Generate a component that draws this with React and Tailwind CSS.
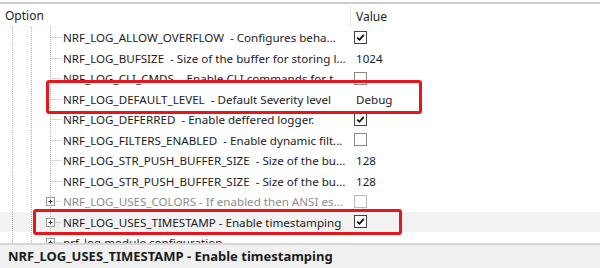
import React from "react";

const rows = [
  { name: "NRF_LOG_ALLOW_OVERFLOW  - Configures beha...", value: "on" },
  { name: "NRF_LOG_BUFSIZE  - Size of the buffer for storing l...", value: "1024" },
  { name: "NRF_LOG_CLI_CMDS  - Enable CLI commands for t...", value: "off" },
  { name: "NRF_LOG_DEFAULT_LEVEL  - Default Severity level", value: "Debug" },
  { name: "NRF_LOG_DEFERRED  - Enable deffered logger.", value: "on" },
  { name: "NRF_LOG_FILTERS_ENABLED  - Enable dynamic filt...", value: "off" },
  { name: "NRF_LOG_STR_PUSH_BUFFER_SIZE  - Size of the bu...", value: "128" },
  { name: "NRF_LOG_STR_PUSH_BUFFER_SIZE  - Size of the bu...", value: "128" },
  { name: "NRF_LOG_USES_COLORS - If enabled then ANSI es...", value: "off", plus: true, disabled: true },
  { name: "NRF_LOG_USES_TIMESTAMP - Enable timestamping", value: "on", plus: true, selected: true },
  { name: "nrf_log module configuration", value: "", plus: true },
];

function TreeGuide({ plus }) {
  return (
    <svg width="63" height="20.5" className="shrink-0">
      <g stroke="#b4b4b4" strokeWidth="1" strokeDasharray="1 1">
        <line x1="12.5" y1="0" x2="12.5" y2="20.5" />
        <line x1="31.5" y1="0" x2="31.5" y2="20.5" />
        <line x1="50.5" y1="0" x2="50.5" y2="20.5" />
        <line x1="50.5" y1="10.5" x2="62" y2="10.5" />
      </g>
      {plus && (
        <g>
          <rect x="46.5" y="6.5" width="8" height="8" fill="#fff" stroke="#9a9a9a" />
          <line x1="48.5" y1="10.5" x2="52.5" y2="10.5" stroke="#333" />
          <line x1="50.5" y1="8.5" x2="50.5" y2="12.5" stroke="#333" />
        </g>
      )}
    </svg>
  );
}

function Check({ checked, disabled }) {
  return (
    <div
      className={
        "w-[13px] h-[13px] border bg-white flex items-center justify-center " +
        (disabled ? "border-[#b8b8b8]" : checked ? "border-[#444]" : "border-[#8a8a8a]")
      }
    >
      {checked && (
        <svg width="9" height="9" viewBox="0 0 9 9">
          <path d="M1.2 4.6 L3.4 6.8 L7.8 1.8" fill="none" stroke="#111" strokeWidth="1.8" />
        </svg>
      )}
    </div>
  );
}

export default function App() {
  return (
    <div
      className="relative w-[600px] h-[268px] overflow-hidden bg-white flex flex-col text-[11.6px] text-[#1b1b1b]"
      style={{ fontFamily: '"Noto Sans", "Open Sans", sans-serif' }}
    >
      <div className="h-[2px] shrink-0" />
      <div className="h-[2px] bg-[#cdcdcd] shrink-0" />
      <div className="h-[23px] shrink-0 flex text-[12px]">
        <div className="w-[350px] pl-[5px] flex items-center">Option</div>
        <div className="border-l border-[#e6e6e6] mt-[2px] pl-[5px] flex items-center">Value</div>
      </div>

      <div className="flex-1 overflow-hidden">
        {rows.map((r, i) => (
          <div key={i} className={"h-[20.5px] flex items-center " + (r.selected ? "bg-[#f2f2f2]" : "")}>
            <TreeGuide plus={r.plus} />
            <div
              className={
                "w-[287px] overflow-hidden whitespace-pre leading-[17px] pt-[1px] " +
                (r.disabled ? "text-[#8c8c8c]" : "")
              }
            >
              {r.name}
            </div>
            <div className="pl-[4px] flex items-center leading-[17px]">
              {r.value === "on" || r.value === "off" ? (
                <Check checked={r.value === "on"} disabled={r.disabled} />
              ) : (
                <span className="pl-[2px] pt-[1px]">{r.value}</span>
              )}
            </div>
          </div>
        ))}
      </div>

      <div className="h-[25px] shrink-0 border-t-2 border-[#d6d6d6] bg-[#f0f0f0] flex items-center pl-[8px] font-bold text-[13px]">
        NRF_LOG_USES_TIMESTAMP - Enable timestamping
      </div>

      <div className="absolute left-[46px] top-[80px] w-[376px] h-[34px] border-[3px] border-[#e8151c] rounded-[3px]" />
      <div className="absolute left-[33px] top-[209px] w-[369px] h-[26px] border-[3px] border-[#e8151c] rounded-[3px]" />
    </div>
  );
}
